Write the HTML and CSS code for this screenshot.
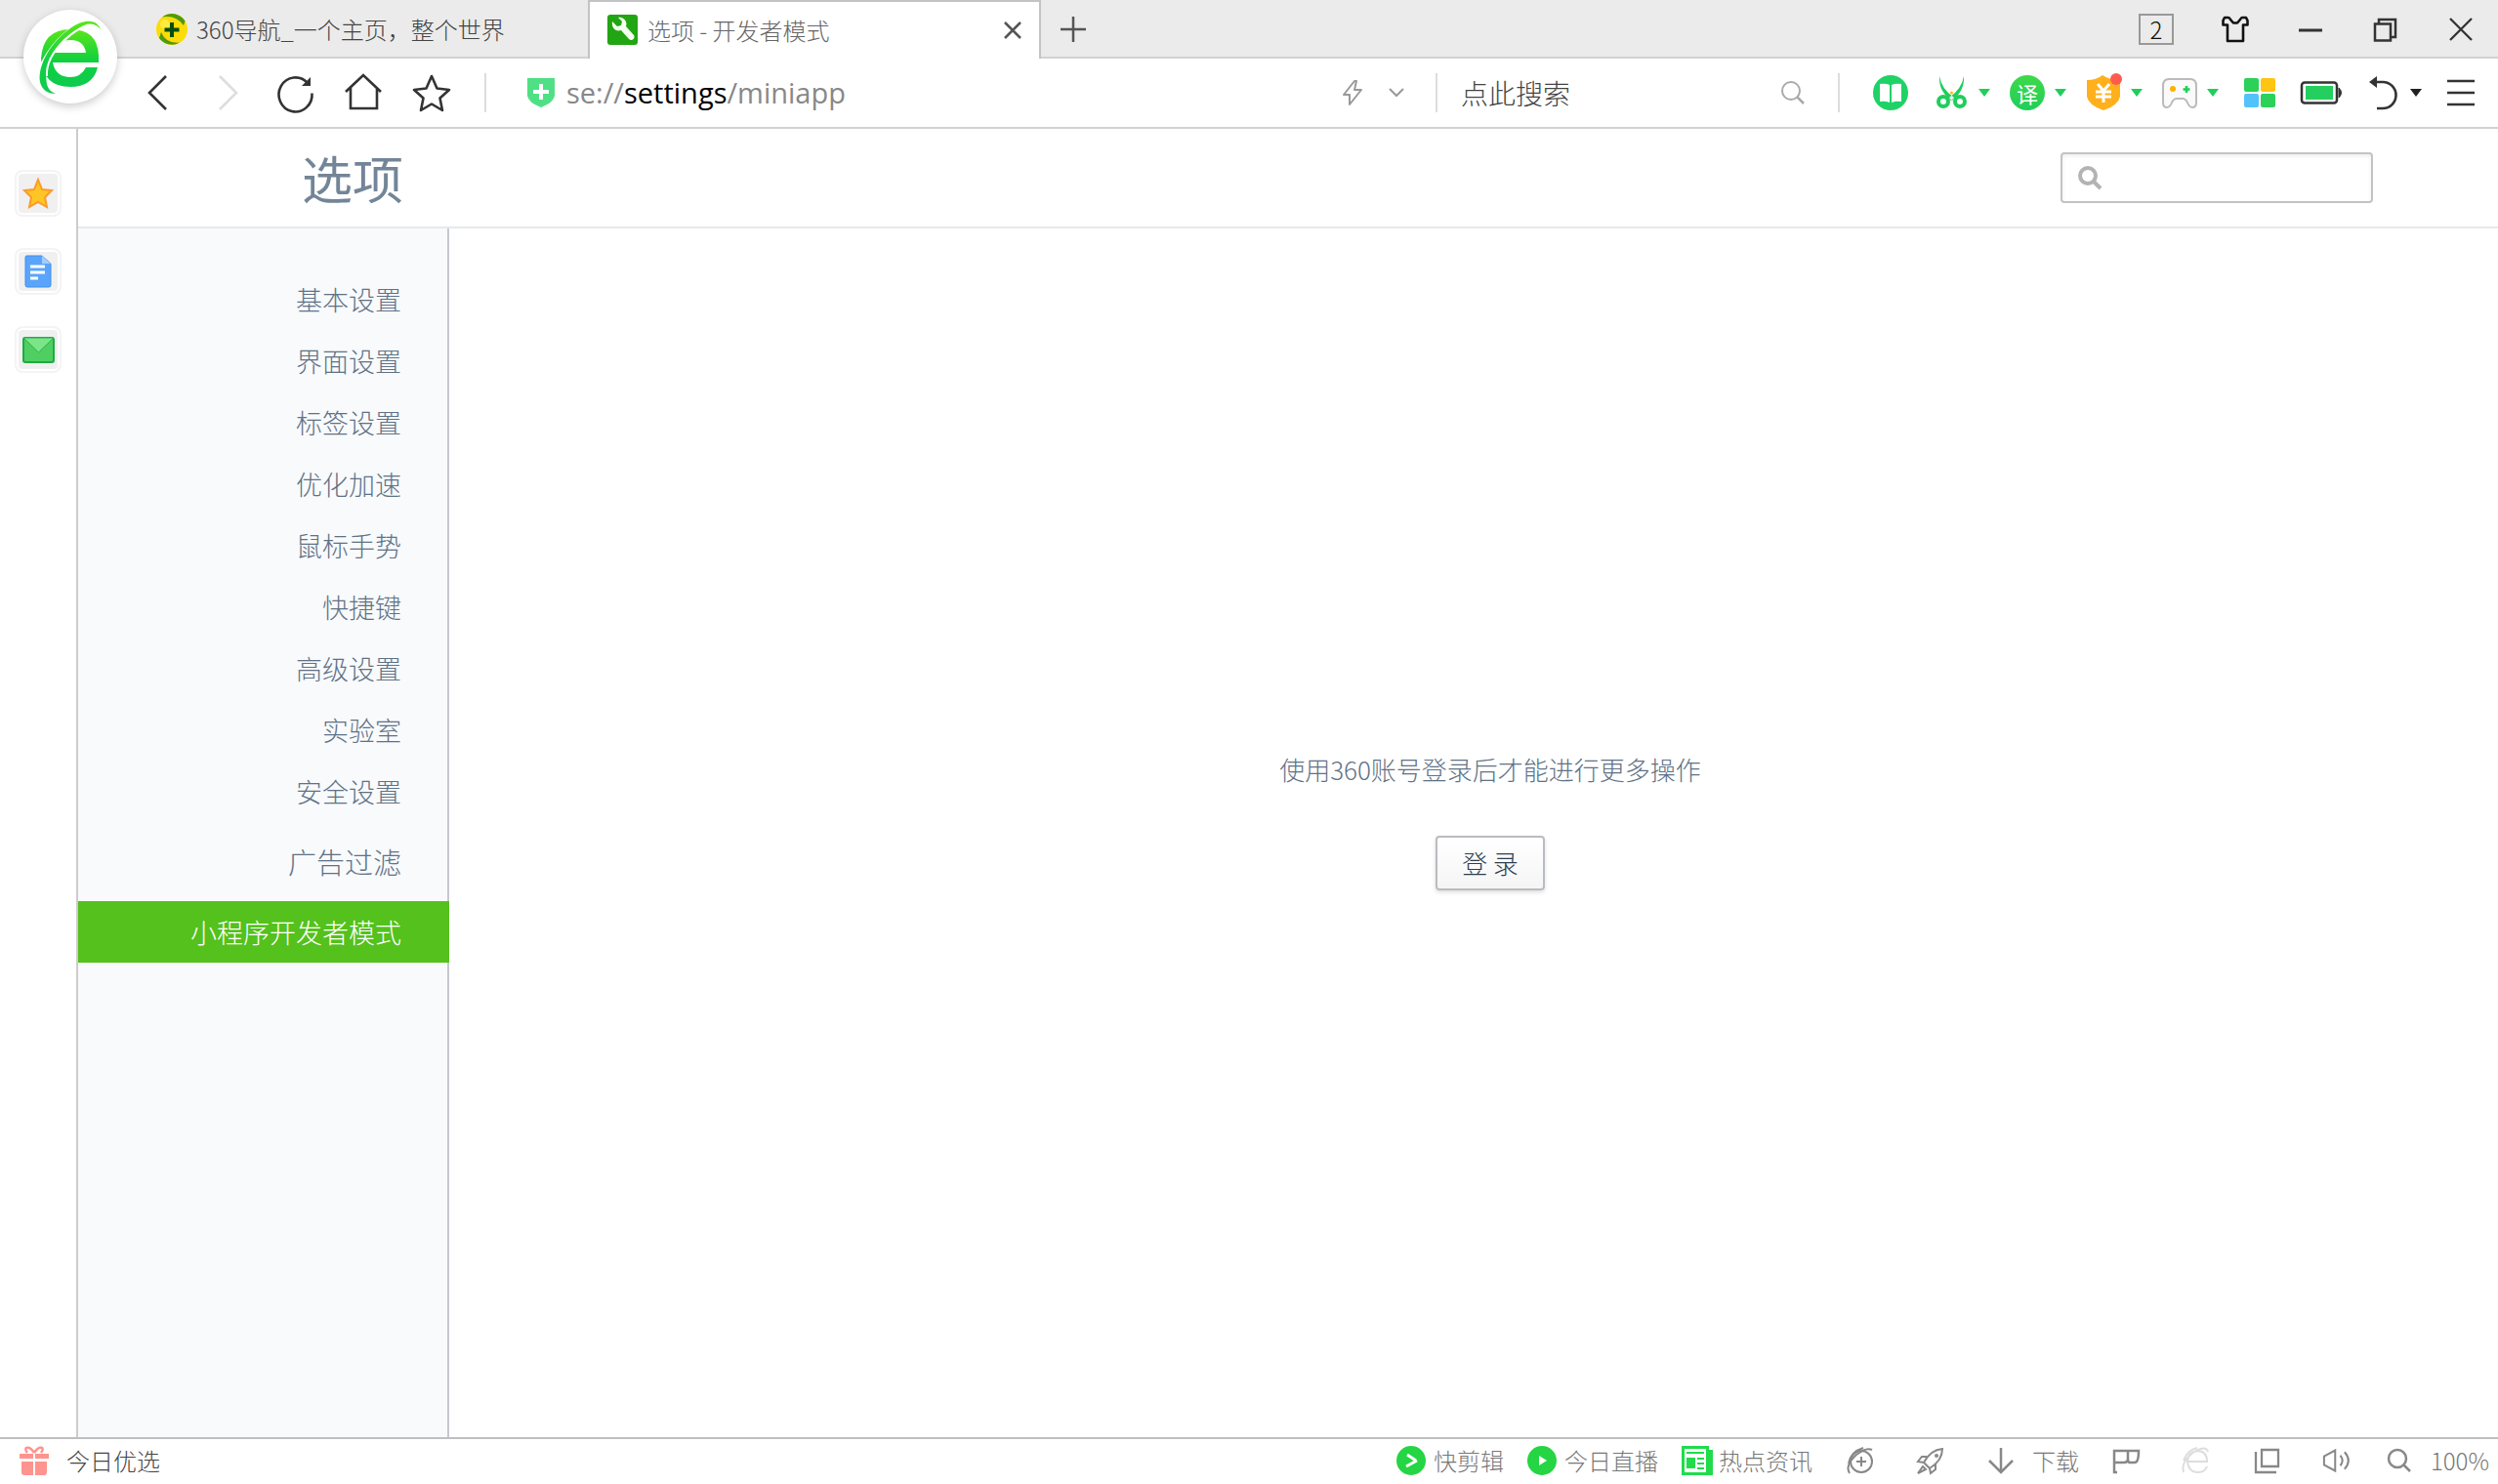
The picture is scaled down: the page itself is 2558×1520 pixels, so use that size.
FILE: index.html
```html
<!DOCTYPE html>
<html lang="zh-CN">
<head>
<meta charset="utf-8">
<title>选项 - 开发者模式</title>
<link rel="stylesheet" href="styles.css">
</head>
<body>
<div class="browser">
  <header class="tabbar">
    <div class="tab">
      <svg class="tab-icon" viewBox="0 0 32 32"><circle cx="16" cy="16" r="16" fill="#fbdc08"/><path d="M6 3.500A16 16 0 0 1 29.500 7.500L28 12Q20 1 6 3.500zM3 25L5 19Q10 31 24 29.500A16 16 0 0 1 3 25z" fill="#4d9a0c"/><circle cx="9" cy="11" r="5" fill="#fff36b" opacity=".6"/><path d="M16 9v15M8.500 16.500h15" stroke="#0a4d12" stroke-width="4"/></svg>
      <span class="tab-title">360导航_一个主页，整个世界</span>
    </div>
    <div class="tab active">
      <svg class="tab-icon" viewBox="0 0 32 32"><rect width="31" height="31" rx="3" fill="#22a512"/><path d="M5 7l5 5 4-1 1-4-4-4c5-1 10 4 8 9l8 9c2 3-2 7-5 4l-8-9c-6 2-10-3-9-9z" fill="#f5fff0"/></svg>
      <span class="tab-title">选项 - 开发者模式</span>
      <button class="tab-close" aria-label="关闭标签"><svg viewBox="0 0 18 18"><path d="M1 1l16 16M17 1L1 17" stroke="#555" stroke-width="2.500"/></svg></button>
    </div>
    <button class="new-tab" aria-label="新建标签"><svg viewBox="0 0 26 26"><path d="M13 0v26M0 13h26" stroke="#555" stroke-width="2.500"/></svg></button>
    <div class="window-tools">
      <button class="count">2</button>
      <button aria-label="皮肤"><svg viewBox="0 0 28 28"><path d="M7 2H3L1.500 5v4.500H6V26h16V9.500h4.500V5L25 2h-4q-1 0-2 2l-3 3.500h-4L9 4Q8 2 7 2z" fill="none" stroke="#111" stroke-width="2.600" stroke-linejoin="round"/></svg></button>
      <button aria-label="最小化"><svg viewBox="0 0 28 28"><path d="M2 15h24" stroke="#333" stroke-width="3"/></svg></button>
      <button aria-label="还原"><svg viewBox="0 0 28 28"><path d="M3 8.500h16v17H3zM7 8V4h17v18h-5" fill="none" stroke="#333" stroke-width="2.500"/></svg></button>
      <button aria-label="关闭"><svg viewBox="0 0 28 28"><path d="M3 3l22 22M25 3L3 25" stroke="#333" stroke-width="2.300"/></svg></button>
    </div>
  </header>

  <div class="toolbar">
    <nav class="nav-buttons" aria-label="导航">
      <button aria-label="后退"><svg viewBox="0 0 40 40"><path d="M29 3L12 20l17 17" fill="none" stroke="#333" stroke-width="2.600"/></svg></button>
      <button aria-label="前进" disabled><svg viewBox="0 0 40 40"><path d="M14 3l17 17-17 17" fill="none" stroke="#ddd" stroke-width="2.600"/></svg></button>
      <button aria-label="刷新"><svg viewBox="0 0 40 40"><path d="M34 10A17 17.500 0 1 0 38.500 20.500" fill="none" stroke="#333" stroke-width="2.600"/><path d="M37 4v9h-9z" fill="#333"/></svg></button>
      <button aria-label="主页"><svg viewBox="0 0 40 40"><path d="M3 19L21 2l18 17M8 15v21h27V15" fill="none" stroke="#333" stroke-width="2.600"/></svg></button>
      <button aria-label="收藏"><svg viewBox="0 0 40 40"><path d="M21 3l5.500 12.500L39 17l-9.500 8.500L32 38l-11-6.500L10 38l2.500-12.500L3 17l12.500-1.500z" fill="none" stroke="#333" stroke-width="2.600" stroke-linejoin="round"/></svg></button>
    </nav>
    <div class="address">
      <svg class="shield" viewBox="0 0 28 30"><path d="M0 0h28v18q-1 7-14 12Q1 25 0 18z" fill="#4fe085"/><path d="M14 6v16M6 14h16" stroke="#fff" stroke-width="4"/></svg>
      <div class="url">se://<b>settings</b>/miniapp</div>
      <button class="flash" aria-label="极速模式"><svg viewBox="0 0 20 26"><path d="M12 1L1 15h6l0 10L19 10h-7l2-9z" fill="none" stroke="#999" stroke-width="2" stroke-linejoin="round"/></svg></button>
      <button class="expand" aria-label="展开"><svg viewBox="0 0 16 10"><path d="M1 1l7 7 7-7" fill="none" stroke="#999" stroke-width="2"/></svg></button>
    </div>
    <div class="quick-search">
      <input type="text" placeholder="点此搜索" aria-label="点此搜索">
      <button aria-label="搜索"><svg viewBox="0 0 24 24"><circle cx="10" cy="10" r="9" fill="none" stroke="#aaa" stroke-width="2"/><path d="M16 16l7 7" stroke="#aaa" stroke-width="2.500"/></svg></button>
    </div>
    <div class="extensions">
      <button class="reader" aria-label="阅读"><svg viewBox="0 0 36 36"><circle cx="18" cy="18" r="18" fill="#1fd266"/><path d="M7 9q6-1 10 1v18q-5-2-10-1zM29 9q-6-1-10 1v18q5-2 10-1z" fill="#fff"/></svg></button>
      <div class="pairs">
        <button class="pair" aria-label="截图"><svg viewBox="0 0 36 36"><path d="M6 1q2 13 15 22l-3 3Q5 16 6 1zM31 1q-2 13-15 22l3 3Q32 16 31 1z" fill="#1fce5b"/><circle cx="10" cy="27" r="5" fill="none" stroke="#1fce5b" stroke-width="4"/><circle cx="27" cy="27" r="5" fill="none" stroke="#1fce5b" stroke-width="4"/><circle cx="18.500" cy="18" r="1.500" fill="#fb0"/></svg><i></i></button>
        <button class="pair" aria-label="翻译"><span class="translate">译</span><i></i></button>
        <button class="pair" aria-label="购物"><svg viewBox="0 0 36 36"><path d="M1 5q10 0 16-5 7 5 18 5v17q-2 9-17 14Q3 31 1 22z" fill="#ffb01c"/><path d="M12 9l6 7 6-7M18 16v12M10 17h16M10 22h16" fill="none" stroke="#fff" stroke-width="3"/><circle cx="31" cy="4" r="6" fill="#ff5a50"/></svg><i></i></button>
        <button class="pair" aria-label="游戏"><svg viewBox="0 0 36 36"><path d="M7 4h22q6 0 6 7v17q0 5-4 5-3 0-5-5-2-4-5-4h-6q-3 0-5 4-2 5-5 5-4 0-4-5V11q0-7 6-7z" fill="#fafafa" stroke="#bbb" stroke-width="2"/><circle cx="11" cy="14" r="3" fill="#ffb000"/><path d="M25 11v7M21.500 14.500h7" stroke="#1fce5b" stroke-width="2.500"/></svg><i></i></button>
      </div>
      <button class="apps" aria-label="应用"><svg viewBox="0 0 32 30"><rect width="15" height="14" rx="2" fill="#2bd159"/><rect x="17" width="15" height="14" rx="2" fill="#ffc414"/><rect y="16" width="15" height="14" rx="2" fill="#52c3f8"/><rect x="17" y="16" width="15" height="14" rx="2" fill="#2bd159"/></svg></button>
      <button class="battery" aria-label="电池"><svg viewBox="0 0 44 24"><rect x="1" y="1.500" width="36" height="21" rx="3" fill="#fff" stroke="#333" stroke-width="2.500"/><rect x="5" y="5" width="28" height="14" fill="#24cf5f"/><path d="M39 7q5 5 0 10z" fill="#333" stroke="#333"/></svg></button>
      <button class="undo" aria-label="撤销"><svg viewBox="0 0 32 34"><path d="M3 6h11a13.500 13.500 0 0 1 0 27H8" fill="none" stroke="#333" stroke-width="2.600"/><path d="M0 6l8-6v12z" fill="#333"/></svg><i></i></button>
      <button class="menu" aria-label="菜单"><svg viewBox="0 0 28 28"><path d="M0 2h28M0 14h28M0 26h28" stroke="#333" stroke-width="2.500"/></svg></button>
    </div>
  </div>
  <svg class="logo" viewBox="0 0 112 112" role="img" aria-label="360安全浏览器">
    <defs><linearGradient id="leaf" x1="0" y1="0" x2="0" y2="1"><stop offset="0" stop-color="#5ae61a"/><stop offset=".55" stop-color="#0fd03f"/><stop offset="1" stop-color="#0fcb4e"/></linearGradient></defs>
    <circle cx="56" cy="56" r="48" fill="#fff"/>
    <path fill="url(#leaf)" fill-rule="evenodd" d="M85 62H38q3 15 18 15 11 0 16-10h12Q79 87 56 87 28 87 26 58 28 28 56 28 84 28 85 55zM39 52h33q-2-13-16-13T39 52z"/>
    <path d="M87 28C82 18 70 20 58 29 38 44 27 64 25 76" fill="none" stroke="#fff" stroke-width="7"/>
    <path fill="url(#leaf)" d="M88 31C85 18 72 16 56 27 38 39 22 64 25 82q3 12 16 12C32 91 30 82 32 70 36 50 54 32 70 24q12-5 18 7z"/>
    <path d="M88 31C80 18 64 26 50 39 39 50 31 63 32 76" fill="none" stroke="#fff" stroke-width="2"/>
  </svg>

  <div class="body">
    <aside class="dock">
      <button aria-label="收藏夹"><svg viewBox="0 0 34 34"><path d="M17 3l4 10 10 1-7 7 2 10-9-5-9 5 2-10-7-7 10-1z" fill="#ffc524" stroke="#fb9a2b" stroke-width="2"/></svg></button>
      <button aria-label="文档"><svg viewBox="0 0 34 34"><path d="M5 1h16l9 8v22q0 2-2 2H6q-2 0-2-2V3q0-2 1-2z" fill="#5aa5fb" stroke="#3f8df0" stroke-width="1"/><path d="M21 1l9 8h-9z" fill="#a3cdff"/><path d="M9 12h15M9 18h15M9 24h8" stroke="#fff" stroke-width="3"/></svg></button>
      <button aria-label="邮件"><svg viewBox="0 0 34 34"><rect x="2" y="5" width="31" height="25" rx="2" fill="#4fcf62" stroke="#1faa45" stroke-width="2"/><path d="M2 5h31L17.500 20z" fill="#7be588" stroke="#27b04c" stroke-width="1"/></svg></button>
    </aside>
    <div class="page">
      <div class="page-head">
        <h1>选项</h1>
        <label class="page-search">
          <svg viewBox="0 0 24 24"><circle cx="10" cy="10" r="8" fill="none" stroke="#b3b3b3" stroke-width="4"/><path d="M15 15l8 8" stroke="#b3b3b3" stroke-width="4"/></svg>
          <input type="text" aria-label="搜索选项">
        </label>
      </div>
      <div class="columns">
        <nav class="settings" aria-label="选项分类">
          <a href="#basic">基本设置</a>
          <a href="#ui">界面设置</a>
          <a href="#tabs">标签设置</a>
          <a href="#speed">优化加速</a>
          <a href="#mouse">鼠标手势</a>
          <a href="#keys">快捷键</a>
          <a href="#advanced">高级设置</a>
          <a href="#lab">实验室</a>
          <a href="#safety">安全设置</a>
          <a class="large" href="#adblock">广告过滤</a>
          <a class="current" href="#miniapp">小程序开发者模式</a>
        </nav>
        <main class="content">
          <p>使用360账号登录后才能进行更多操作</p>
          <button class="login">登 录</button>
        </main>
      </div>
    </div>
  </div>

  <footer class="statusbar">
    <a class="daily" href="#daily"><svg viewBox="0 0 30 30"><path d="M0 8h14v5H0zM16 8h14v5H16zM2 16h12v14H5q-3 0-3-3zM16 16h12v11q0 3-3 3h-9z" fill="#ff948e"/><path d="M15 7C10-1 3 1 8 7M15 7c5-8 12-6 7 0" fill="none" stroke="#ff948e" stroke-width="2.500"/></svg>今日优选</a>
    <div class="links">
      <a href="#clip"><svg viewBox="0 0 30 30"><circle cx="15" cy="15" r="15" fill="#25d543"/><path d="M11 9l9 6M10 21l11-6" stroke="#fff" stroke-width="3"/></svg>快剪辑</a>
      <a href="#live"><svg viewBox="0 0 30 30"><circle cx="15" cy="15" r="15" fill="#25d543"/><path d="M12 10l8 5-8 5z" fill="#fff"/></svg>今日直播</a>
      <a class="news" href="#news"><svg viewBox="0 0 32 30"><path d="M0 0h28v4h4v26H0z" fill="#20dc4b"/><path d="M3 3h22v24H3z" fill="#fff"/><path d="M5 7h18M16 13h7M16 18h7M16 23h7" stroke="#20dc4b" stroke-width="2"/><path d="M5 12h9v11H5z" fill="#20dc4b"/></svg>热点资讯</a>
    </div>
    <div class="status-tools">
      <button aria-label="加速"><svg viewBox="0 0 28 28"><circle cx="15" cy="15" r="11" fill="none" stroke="#888" stroke-width="2"/><path d="M3 27Q-2 19 10 8 20 0 26 3M2 17Q4 5 17 1M15 10v10M10 15h10" fill="none" stroke="#888" stroke-width="2"/></svg></button>
      <button aria-label="火箭"><svg viewBox="0 0 28 28"><path d="M7 16Q14 3 26 2q0 12-13 20zM10 10H5l-4 5 6 1M19 18v5l-5 4-1-5M1 27l5-7 3 3z" fill="none" stroke="#888" stroke-width="2"/><circle cx="20" cy="9" r="2" fill="#888"/></svg></button>
      <button class="download"><svg viewBox="0 0 28 28"><path d="M14 1v25M2 14l12 12 12-12" fill="none" stroke="#888" stroke-width="2.500"/></svg>下载</button>
      <button aria-label="标记"><svg viewBox="0 0 28 28"><path d="M5 26H2V4h25q0 12-4 12h-5q-2 0-2-4V4M2 16h10q4 0 4-4" fill="none" stroke="#888" stroke-width="2.500"/></svg></button>
      <button aria-label="内核"><svg viewBox="0 0 28 28"><path d="M5 15h20Q25 4 15 4 5 6 5 15q1 11 11 11 7 0 9-6M1 26Q-2 15 12 5 24-2 26 5M1 14Q5 3 15 1" fill="none" stroke="#ddd" stroke-width="2"/></svg></button>
      <button aria-label="窗口"><svg viewBox="0 0 28 28"><path d="M9 3h17v17H9zM3 5v21h21" fill="none" stroke="#888" stroke-width="2.300"/></svg></button>
      <button aria-label="声音"><svg viewBox="0 0 32 28"><path d="M1 9l13-7v24L1 19zM20 8q5 6 0 12M25 4q9 10 0 20" fill="none" stroke="#888" stroke-width="2.300"/></svg></button>
      <button class="zoom-level"><svg viewBox="0 0 24 24"><circle cx="10" cy="10" r="9" fill="none" stroke="#888" stroke-width="2.500"/><path d="M16 16l7 7" stroke="#888" stroke-width="2.500"/></svg>100%</button>
    </div>
  </footer>
</div>
</body>
</html>
```
FILE: styles.css
```css
* { box-sizing: border-box; }
body { margin: 0; font: 24px/32px "Noto Sans CJK SC", sans-serif; font-weight: 300; color: #444; background: #fff; }
button { border: 0; padding: 0; margin: 0; background: none; color: inherit; font: inherit; display: flex; align-items: center; justify-content: center; }
a { color: inherit; text-decoration: none; }
input { border: 0; padding: 0; background: none; font: inherit; color: inherit; outline: 0; min-width: 0; }
svg { display: block; flex: none; overflow: visible; }

.browser { position: relative; display: flex; flex-direction: column; min-height: 100vh; }

.tabbar { display: flex; height: 60px; padding-left: 140px; background: #ebebeb; box-shadow: inset 0 -2px #d2d2d2; }
.tab { display: flex; align-items: center; width: 462px; padding: 0 20px; }
.tab-icon { width: 32px; height: 32px; margin-right: 9px; }
.active { width: 464px; padding: 0 18px; background: #fff; border: 2px solid #c3c3c3; border-bottom: 0; color: #666; }
.tab-title { flex: 1; white-space: nowrap; }
.tab-close svg { width: 18px; height: 18px; }
.new-tab { width: 66px; }
.new-tab svg { width: 26px; height: 26px; }
.window-tools { display: flex; align-items: center; gap: 49px; margin-left: auto; padding-right: 24px; }
.window-tools svg { width: 28px; height: 28px; }
.window-tools .count { width: 36px; height: 32px; border: 2px solid #999; color: #111; }

.toolbar { display: flex; align-items: center; height: 72px; padding-left: 141px; border-bottom: 2px solid #d2d2d2; }
.nav-buttons { display: flex; gap: 30px; padding-right: 35px; }
.nav-buttons svg { width: 40px; height: 40px; }
.address, .quick-search, .extensions { display: flex; align-items: center; height: 40px; border-left: 2px solid #ddd; }
.address { flex: 1; padding: 0 32px 0 42px; }
.shield { width: 28px; height: 30px; }
.url { flex: 1; margin-left: 12px; font: 29px/40px "Open Sans", sans-serif; color: #888; }
.url b { font-weight: 400; color: #000; }
.flash svg { width: 20px; height: 26px; }
.expand { margin-left: 27px; }
.expand svg { width: 16px; height: 10px; }
.quick-search { width: 412px; padding: 0 34px 0 24px; }
.quick-search input { flex: 1; font-size: 28px; }
.quick-search input::placeholder { color: #444; opacity: 1; }
.quick-search svg { width: 24px; height: 24px; }
.extensions { gap: 26px; padding: 0 24px 0 34px; }
.extensions i { border: 6px solid transparent; border-top: 8px solid #1fce5b; border-bottom: 0; }
.reader svg, .pair svg { width: 36px; height: 36px; }
.pairs { display: flex; gap: 20px; }
.pair { gap: 10px; }
.translate { width: 36px; height: 36px; border-radius: 50%; background: linear-gradient(#3ed94a, #1fce5b); color: #fff; font-size: 22px; line-height: 36px; font-weight: 400; }
.apps svg { width: 32px; height: 30px; }
.battery svg { width: 44px; height: 24px; }
.undo { gap: 10px; }
.undo svg { width: 32px; height: 34px; }
.undo i { border-top-color: #222; }
.menu svg { width: 28px; height: 28px; }

.logo { position: absolute; left: 16px; top: 2px; width: 112px; height: 112px; filter: drop-shadow(0 3px 4px #0003); }

.body { display: flex; flex: 1; }
.dock { display: flex; flex-direction: column; align-items: center; gap: 32px; width: 80px; padding-top: 42px; border-right: 2px solid #ccc; }
.dock button { width: 48px; height: 48px; border: 2px solid #f4f4f4; border-radius: 8px; background: #f0f0f0; box-shadow: inset 0 0 0 2px #fff; }
.dock svg { width: 34px; height: 34px; }
.page { display: flex; flex: 1; flex-direction: column; }
.page-head { display: flex; align-items: center; justify-content: space-between; height: 102px; padding: 0 128px 0 229px; border-bottom: 2px solid #e6e9ec; }
h1 { margin: 0; font-size: 52px; line-height: 72px; font-weight: 400; color: #738598; }
.page-search { display: flex; align-items: center; width: 320px; height: 52px; padding: 0 16px; border: 2px solid #c3c3c3; border-radius: 4px; box-shadow: inset 0 2px 4px #0001; }
.page-search svg { width: 24px; height: 24px; }
.page-search input { flex: 1; margin-left: 8px; }
.columns { display: flex; flex: 1; }
.settings { width: 380px; padding-top: 41px; background: #f8fafc; box-shadow: inset -2px 0 #c5c8cc; color: #5f7286; font-size: 27px; text-align: right; }
.settings a { display: block; padding-right: 49px; line-height: 63px; }
.settings .large { font-size: 29px; line-height: 81px; }
.settings .current { background: #54c11c; color: #fff; }
.content { display: flex; flex: 1; flex-direction: column; align-items: center; padding: 538px 0 0 34px; }
.content p { margin: 0 0 52px; font-size: 26px; color: #5f7286; }
.login { width: 112px; height: 56px; border: 2px solid #b9bcc0; border-radius: 4px; background: linear-gradient(#fff, #f5f5f5); box-shadow: 0 2px 4px #0002; font-size: 26px; color: #2c3e50; }

.statusbar { display: flex; align-items: center; height: 48px; border-top: 2px solid #bfbfbf; padding: 0 9px 2px 20px; color: #777; }
.statusbar a, .statusbar button { display: flex; align-items: center; gap: 8px; }
.statusbar a svg { width: 30px; height: 30px; }
.statusbar .daily { gap: 18px; color: #444; }
.links { display: flex; gap: 24px; margin-left: auto; }
.statusbar .news { gap: 6px; }
.statusbar .news svg { width: 32px; }
.status-tools { display: flex; align-items: center; gap: 44px; margin-left: 35px; }
.status-tools svg { width: 28px; height: 28px; }
.statusbar .download { gap: 18px; margin-right: -10px; }
.statusbar .zoom-level { gap: 20px; margin-left: -6px; }
.zoom-level svg { width: 24px; height: 24px; }
```
